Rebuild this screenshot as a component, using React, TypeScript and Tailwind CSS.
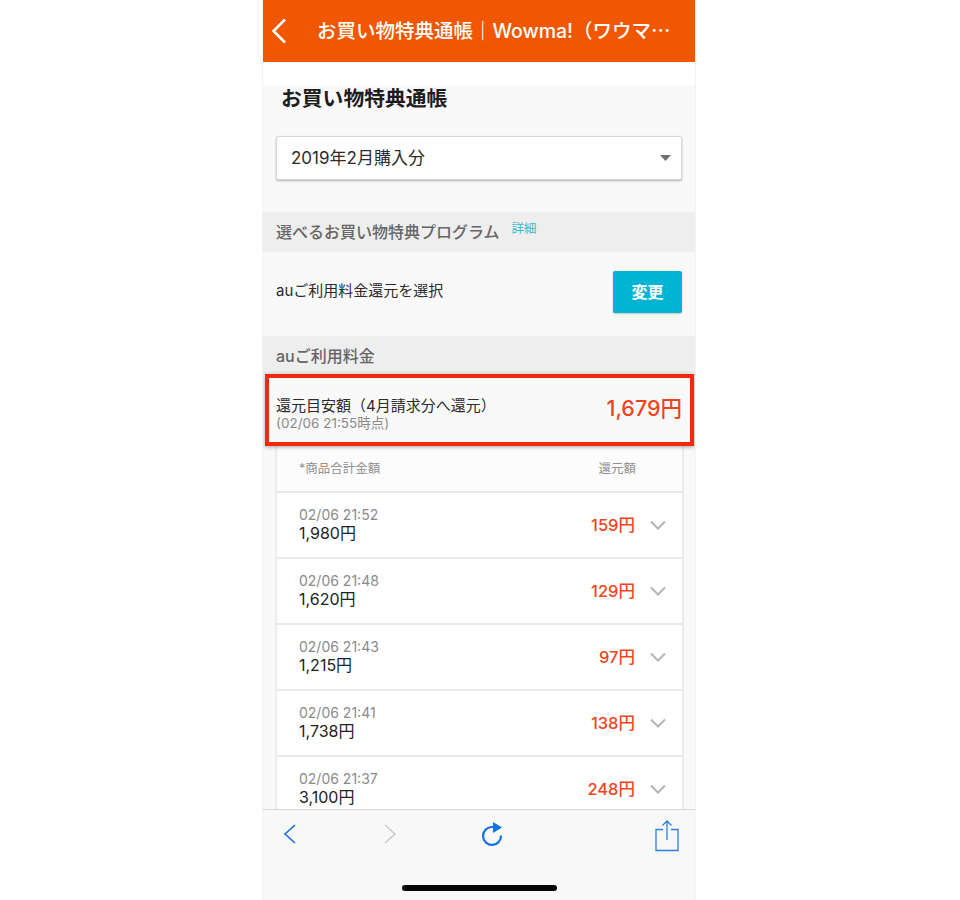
import React from "react";

const rows = [
  ["02/06 21:52", "1,980円", "159円"],
  ["02/06 21:48", "1,620円", "129円"],
  ["02/06 21:43", "1,215円", "97円"],
  ["02/06 21:41", "1,738円", "138円"],
  ["02/06 21:37", "3,100円", "248円"],
];

function Row({ date, total, back }: { date: string; total: string; back: string }) {
  return (
    <div className="flex h-[66px] shrink-0 items-center border-b-2 border-[#e9e9e9] bg-white pl-[22px] pr-[16px]">
      <div className="mb-[2px] flex-1">
        <div className="text-[14px] leading-[18px] text-[#8a8a8a]">{date}</div>
        <div className="text-[16px] leading-[19px] text-[#222]">{total}</div>
      </div>
      <div className="mr-[15px] text-[16.500px] font-medium text-[#f0451c]">{back}</div>
      <svg width="16" height="10" viewBox="0 0 16 10" fill="none" stroke="#b4b4b4" strokeWidth="2">
        <path d="M1 1.5 8 8.5 15 1.5" />
      </svg>
    </div>
  );
}

function Toolbar() {
  return (
    <div className="absolute bottom-0 left-[262px] flex h-[91px] w-[434px] flex-col border-x border-t border-x-[#f3f3f3] border-t-[#d9d9d9] bg-[#f8f8f8]">
      <div className="flex h-[52px] items-center pl-[20px] pr-[16px]">
        <svg className="mb-[4px]" width="14" height="20" viewBox="0 0 14 20" fill="none" stroke="#1670e0" strokeWidth="1.6"><path d="M12 1 2 10l10 9" /></svg>
        <svg className="mb-[4px] ml-[86px]" width="14" height="20" viewBox="0 0 14 20" fill="none" stroke="#c9c9c9" strokeWidth="1.6"><path d="M2 1l10 9-10 9" /></svg>
        <svg className="ml-[84px]" width="24" height="28" viewBox="0 0 24 28" fill="none">
          <path d="M20 13.5a9 9 0 1 1-9.500-8.500H13" stroke="#1670e0" strokeWidth="2.2" />
          <path d="M12 0l9 5.500-9 5.500z" fill="#1670e0" />
        </svg>
        <svg className="ml-auto" width="24" height="32" viewBox="0 0 24 32" fill="none" stroke="#2c7fdc" strokeWidth="1.3">
          <path d="M8 9.500H1v21h22v-21h-7" />
          <path d="M12 20V1M7.500 5.500 12 1l4.500 4.500" />
        </svg>
      </div>
      <div className="mt-[23px] h-[6px] w-[155px] self-center rounded-full bg-[#050505]" />
    </div>
  );
}

export default function App() {
  return (
    <div className="flex h-[900px] overflow-hidden bg-white pl-[262px] font-['Inter','Noto_Sans_CJK_JP',sans-serif]">
      <div className="flex w-[434px] flex-col overflow-hidden border-x border-[#f3f3f3] bg-[#f9f9f9]">
        <header className="flex h-[62px] shrink-0 items-center bg-[#f15700] pl-[8px] pr-[10px] text-white">
          <svg width="16" height="26" viewBox="0 0 16 26" fill="none" stroke="#fff" strokeWidth="2.6">
            <path d="M14 1.500 2.500 13 14 24.500" />
          </svg>
          <div className="ml-[30px] flex-1 whitespace-nowrap text-[19.5px] font-medium leading-[26px]">
            お買い物特典通帳｜Wowma!（ワウマ⋯
          </div>
        </header>
        <div className="h-[23px] shrink-0 bg-white" />
        <div className="flex h-[51px] shrink-0 items-start pl-[18px] pt-[1px]">
          <h1 className="text-[20.8px] font-bold leading-[26px] text-[#1d1d1d]">お買い物特典通帳</h1>
        </div>
        <div className="mx-[13px] flex h-[44px] shrink-0 items-center rounded-[2px] border border-[#d8d8d8] bg-white pl-[14px] pr-[10px] shadow-[0_1px_2px_rgba(0,0,0,0.3)]">
          <span className="flex-1 pt-[1px] text-[17px] text-[#2b2b2b]">2019年2月購入分</span>
          <svg width="11" height="6" viewBox="0 0 11 6" fill="#707070"><path d="M0 0h11L5.500 6z" /></svg>
        </div>
        <div className="h-[32px] shrink-0" />
        <div className="flex h-[40px] shrink-0 items-center bg-[#eeeeee] pl-[13px]">
          <span className="text-[16px] font-medium text-[#666]">選べるお買い物特典プログラム</span>
          <span className="mb-[5px] ml-[12px] text-[12.500px] text-[#3cb8cf]">詳細</span>
        </div>
        <div className="flex h-[84px] shrink-0 items-center justify-between pl-[13px] pr-[13px]">
          <span className="mb-[5px] text-[15px] text-[#2b2b2b]">auご利用料金還元を選択</span>
          <button className="mb-[4px] h-[42px] w-[69px] rounded-[2px] bg-[#00b4d2] text-[16px] font-bold text-white shadow-[0_1px_2px_rgba(0,0,0,0.2)]">
            変更
          </button>
        </div>
        <div className="flex h-[40px] shrink-0 items-center bg-[#eeeeee] pl-[13px]">
          <span className="text-[16px] font-medium text-[#666]">auご利用料金</span>
        </div>
        <div className="relative flex h-[70px] shrink-0 items-center justify-between pl-[13px] pr-[13px]">
          <div className="mt-[5px]">
            <div className="text-[15px] leading-[20px] text-[#2b2b2b]">還元目安額（4月請求分へ還元）</div>
            <div className="text-[13.500px] leading-[15px] text-[#8a8a8a]">(02/06 21:55時点)</div>
          </div>
          <div className="mb-[6px] text-[21.500px] font-medium text-[#f0451c]">1,679円</div>
          <div className="absolute left-[2px] right-[1px] top-[-2px] bottom-0 border-[4px] border-[#f02a0c] shadow-[0_1px_4px_rgba(0,0,0,0.35)]" />
        </div>
        <div className="ml-[12px] mr-[11px] flex flex-col border-x-2 border-[#ececec]">
          <div className="flex h-[47px] shrink-0 items-center justify-between border-b-2 border-[#e9e9e9] bg-[#fcfcfc] pl-[22px] pr-[46px] pt-[1px] text-[12.500px] text-[#8f8f8f]">
            <span>*商品合計金額</span>
            <span>還元額</span>
          </div>
          {rows.map((r) => (
            <Row key={r[0]} date={r[0]} total={r[1]} back={r[2]} />
          ))}
        </div>
      </div>
      <Toolbar />
    </div>
  );
}
